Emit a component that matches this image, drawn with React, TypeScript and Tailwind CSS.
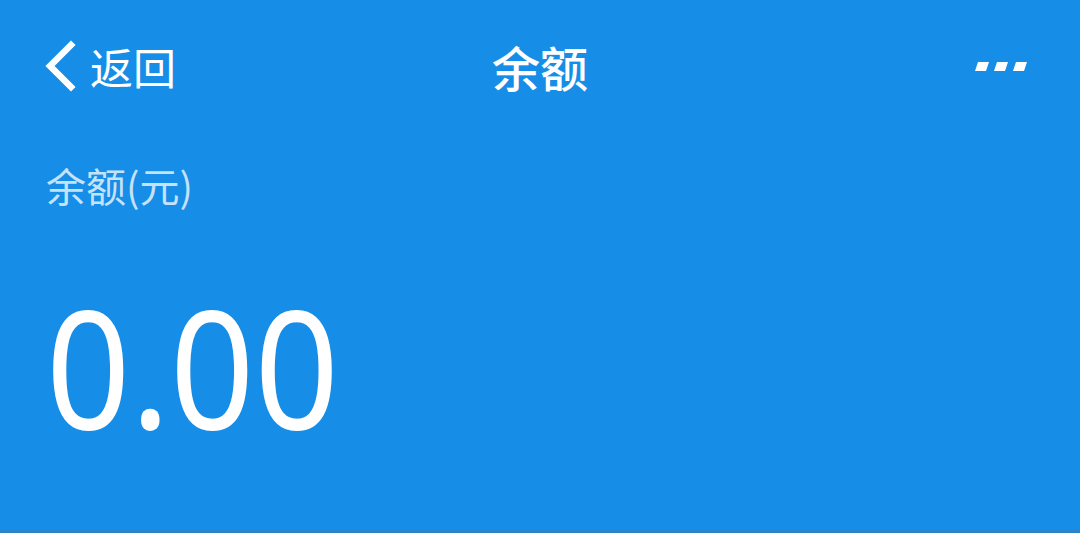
import React from "react";

const CJK = { fontFamily: '"Noto Sans CJK SC", "Noto Sans", sans-serif' };

function BackChevron() {
  return (
    <svg width="34" height="52" viewBox="0 0 34 52" className="shrink-0">
      <path d="M29 5 L8 26 L29 47" fill="none" stroke="#ffffff" strokeWidth="6.5" strokeLinecap="square" strokeLinejoin="miter" />
    </svg>
  );
}

function MoreDots() {
  return (
    <svg width="56" height="12" viewBox="0 0 56 12">
      <polygon points="4,1 15,1 12,10 1,10" fill="#ffffff" />
      <polygon points="23,1 34,1 31,10 20,10" fill="#ffffff" />
      <polygon points="42,1 53,1 50,10 39,10" fill="#ffffff" />
    </svg>
  );
}

export default function App() {
  return (
    <div className="w-full h-[553px] bg-white overflow-hidden">
      <div className="h-[533px] bg-[#168ee8] border-b-[3px] border-[#2a84c9]">
        {/* top bar */}
        <div className="h-[132px] grid grid-cols-[1fr_auto_1fr] items-center px-[42px]">
          <div className="flex items-center gap-[14px]">
            <BackChevron />
            <span className="text-white text-[43px] leading-none" style={CJK}>返回</span>
          </div>
          <div className="text-white text-[48px] leading-none font-medium" style={CJK}>余额</div>
          <div className="flex justify-end pr-[8px] pt-[2px]">
            <MoreDots />
          </div>
        </div>

        {/* balance */}
        <div className="pl-[46px] pt-[33px]">
          <div className="text-white/75 text-[40px] leading-none" style={CJK}>余额(元)</div>
          <div
            className="mt-[79px] text-white text-[164px] leading-none origin-left scale-x-[0.9]"
            style={{ fontFamily: '"Noto Sans", Roboto, sans-serif' }}
          >
            0.00
          </div>
        </div>
      </div>
    </div>
  );
}
